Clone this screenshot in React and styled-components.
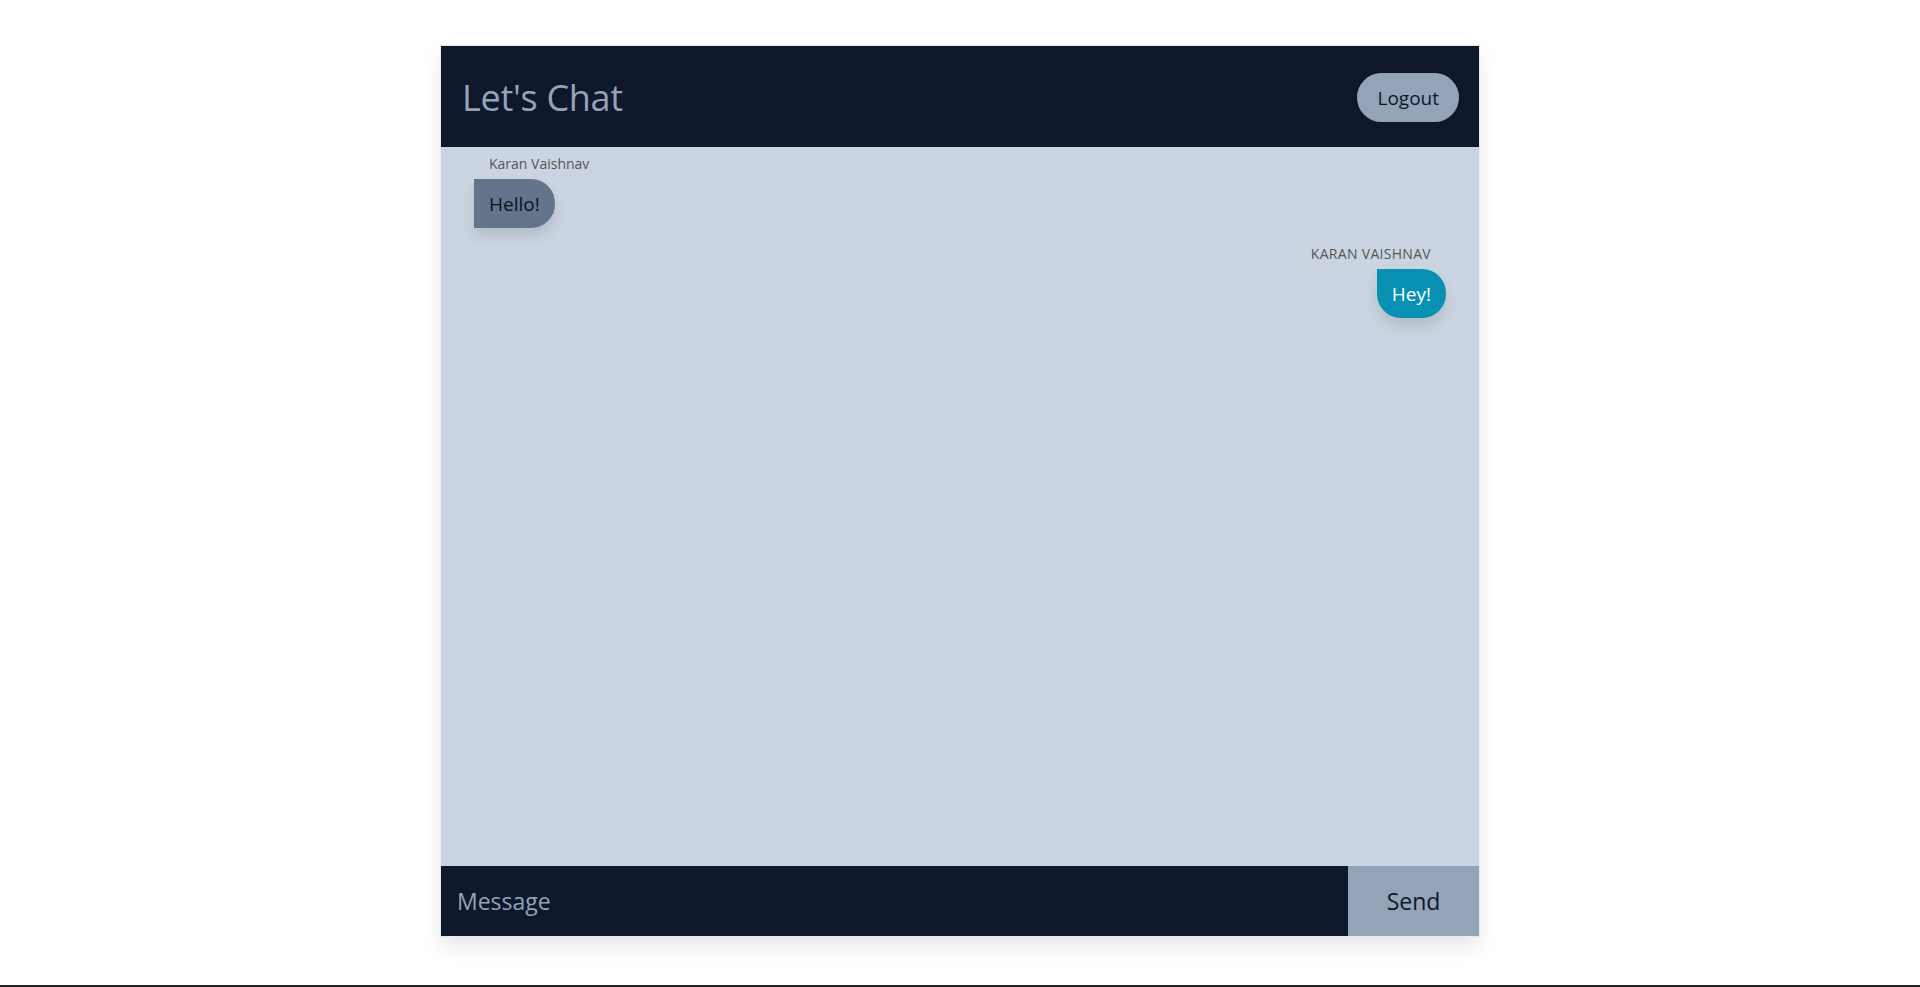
import React from "react";
import styled, { createGlobalStyle } from "styled-components";

const GlobalStyle = createGlobalStyle`
  * {
    box-sizing: border-box;
  }
  body {
    margin: 0;
    background: #fff;
    font-family: "Open Sans", "Noto Sans", sans-serif;
  }
`;

const Page = styled.div`
  min-height: 100vh;
  padding-top: 46px;
  border-bottom: 2px solid #222;
  display: flex;
  flex-direction: column;
  align-items: center;
`;

const ChatBox = styled.div`
  width: 1038px;
  height: 890px;
  display: flex;
  flex-direction: column;
  background-color: #cbd5e1;
  box-shadow: 0 10px 20px rgba(0, 0, 0, 0.1);
  outline: 1px solid #e5e9f0;
`;

const Header = styled.header`
  height: 101px;
  flex-shrink: 0;
  display: flex;
  align-items: center;
  justify-content: space-between;
  padding: 2px 20px 0 21px;
  background-color: #0f172a;
`;

const Title = styled.h1`
  margin: 0;
  font-size: 36px;
  font-weight: 400;
  color: #94a3b8;
  letter-spacing: -0.3px;
`;

const LogoutButton = styled.button`
  height: 49px;
  padding: 0 20px;
  border: none;
  border-radius: 999px;
  background-color: #94a3b8;
  color: #0f172a;
  font-family: inherit;
  font-size: 19px;
  cursor: pointer;
`;

const Messages = styled.div`
  flex: 1;
  display: flex;
  flex-direction: column;
  gap: 16px;
  padding: 7px 33px;
  overflow-y: auto;
`;

const MessageItem = styled.div`
  display: flex;
  flex-direction: column;
  align-items: ${(props) => (props.mine ? "flex-end" : "flex-start")};
`;

const Sender = styled.span`
  padding: 0 15px;
  margin-bottom: 5px;
  font-size: 14px;
  line-height: 20px;
  color: #555;
  text-transform: ${(props) => (props.mine ? "uppercase" : "none")};
  letter-spacing: ${(props) => (props.mine ? "0.3px" : "0")};
`;

const Bubble = styled.div`
  height: 49px;
  display: flex;
  align-items: center;
  padding: 0 15px;
  font-size: 19px;
  color: ${(props) => (props.mine ? "#fff" : "#0b1220")};
  background-color: ${(props) => (props.mine ? "#0891b2" : "#64748b")};
  border-radius: ${(props) => (props.mine ? "0 24px 24px 24px" : "0 24px 24px 0")};
  box-shadow: 0 8px 14px rgba(0, 0, 0, 0.12);
`;

const Footer = styled.form`
  height: 70px;
  flex-shrink: 0;
  display: flex;
`;

const MessageInput = styled.input`
  flex: 1;
  min-width: 0;
  padding: 0 16px;
  border: none;
  outline: none;
  background-color: #0f172a;
  color: #cbd5e1;
  font-family: inherit;
  font-size: 23px;

  &::placeholder {
    color: #94a3b8;
  }
`;

const SendButton = styled.button`
  width: 131px;
  border: none;
  background-color: #94a3b8;
  color: #0f172a;
  font-family: inherit;
  font-size: 23px;
  cursor: pointer;
`;

const messages = [
  { id: 1, sender: "Karan Vaishnav", text: "Hello!", mine: false },
  { id: 2, sender: "Karan Vaishnav", text: "Hey!", mine: true },
];

const App = () => {
  const [text, setText] = React.useState("");

  return (
    <>
      <GlobalStyle />
      <Page>
        <ChatBox>
          <Header>
            <Title>Let's Chat</Title>
            <LogoutButton>Logout</LogoutButton>
          </Header>
          <Messages>
            {messages.map((msg) => (
              <MessageItem key={msg.id} mine={msg.mine}>
                <Sender mine={msg.mine}>{msg.sender}</Sender>
                <Bubble mine={msg.mine}>{msg.text}</Bubble>
              </MessageItem>
            ))}
          </Messages>
          <Footer onSubmit={(e) => e.preventDefault()}>
            <MessageInput
              placeholder="Message"
              value={text}
              onChange={(e) => setText(e.target.value)}
            />
            <SendButton type="submit">Send</SendButton>
          </Footer>
        </ChatBox>
      </Page>
    </>
  );
};

export default App;
